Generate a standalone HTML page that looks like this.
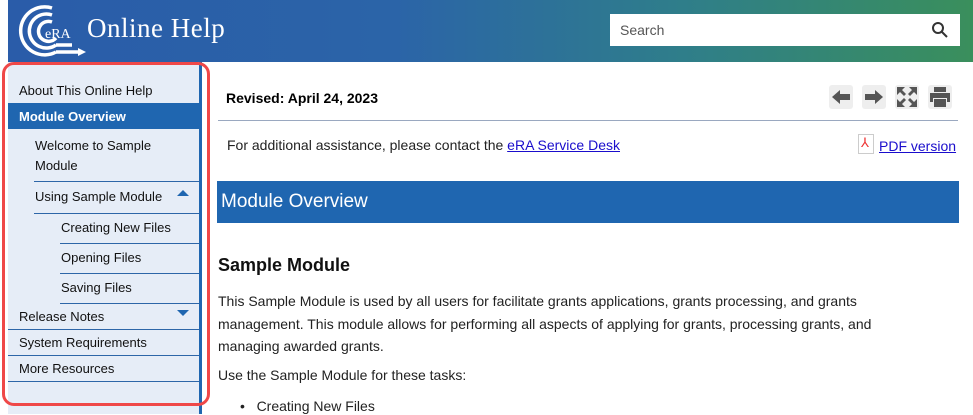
<!DOCTYPE html>
<html><head><style>
body{margin:0;width:973px;height:414px;overflow:hidden;background:#fff;font-family:"Liberation Sans",sans-serif;position:relative}
.hdr{position:absolute;left:8px;top:0;width:965px;height:62px;background:linear-gradient(90deg,#2a5ca9 0%,#2b64a8 40%,#2f7e8a 70%,#3a8f5c 100%)}
.title{position:absolute;left:79px;top:13px;color:#fff;font-family:"Liberation Serif",serif;font-size:27px;letter-spacing:0.5px}
.search{position:absolute;left:602px;top:14px;width:350px;height:32px;background:#fff;box-sizing:border-box}
.search span{position:absolute;left:10px;top:8px;font-size:14px;color:#555}
.side{position:absolute;left:8px;top:62px;width:191px;height:352px;background:#e6edf7;border-right:3px solid #1f66b0}
.side div{position:absolute;font-size:13px;color:#111;box-sizing:border-box;border-bottom:1.5px solid #2d66a8}
.red{position:absolute;left:2px;top:62px;width:202px;height:338px;border:3px solid #ef4848;border-radius:12px}
.main{position:absolute;left:218px;line-height:18px}
a{color:#1a0dcc}
.ic{position:absolute;top:85px;width:24px;height:24px;background:#eee;border-radius:3px}
</style></head><body>
<div class="hdr">
<svg style="position:absolute;left:10px;top:4px" width="70" height="54" viewBox="0 0 70 54"><g fill="none" stroke="#fff" stroke-width="3.5"><path d="M34 4 A24 24 0 1 0 38 48"/><path d="M34 11 A17 17 0 1 0 38 41"/><path d="M34 18 A10 10 0 1 0 38 34"/><path d="M38 48 H62 M38 41 H54"/></g><path d="M60 44 L68 48 L60 52Z" fill="#fff"/><text x="27" y="34" fill="#fff" font-family="Liberation Serif" font-size="14">eRA</text></svg>
<div class="title">Online Help</div>
<div class="search"><span>Search</span><svg style="position:absolute;right:12px;top:8px" width="16" height="16"><circle cx="6" cy="6" r="5" fill="none" stroke="#333" stroke-width="2"/><path d="M10 10L15 15" stroke="#333" stroke-width="2"/></svg></div>
</div>
<div class="side">
<div style="left:0;top:14px;width:191px;height:24px;padding:7px 11px;border:none">About This Online Help</div>
<div style="left:0;top:41px;width:191px;height:26px;padding:6px 11px;background:#1f66b0;color:#fff;font-weight:bold;border:none">Module Overview</div>
<div style="left:26px;top:70px;width:165px;height:50px;padding:4px 1px;line-height:20px">Welcome to Sample<br>Module</div>
<div style="left:26px;top:122px;width:165px;height:30px;padding:5px 1px">Using Sample Module<span style="position:absolute;right:10px;top:6px;width:0;height:0;border:6px solid transparent;border-bottom:6px solid #1f66b0;border-top:0"></span></div>
<div style="left:52px;top:152px;width:139px;height:30px;padding:6px 1px">Creating New Files</div>
<div style="left:52px;top:182px;width:139px;height:30px;padding:6px 1px">Opening Files</div>
<div style="left:52px;top:212px;width:139px;height:30px;padding:6px 1px">Saving Files</div>
<div style="left:0;top:242px;width:191px;height:26px;padding:5px 11px">Release Notes<span style="position:absolute;right:10px;top:6px;width:0;height:0;border:6px solid transparent;border-top:6px solid #1f66b0;border-bottom:0"></span></div>
<div style="left:0;top:268px;width:191px;height:26px;padding:5px 11px">System Requirements</div>
<div style="left:0;top:294px;width:191px;height:26px;padding:5px 11px">More Resources</div>
</div>
<div class="red"></div>
<div class="main" style="left:226px;top:89px;font-size:14px;font-weight:bold">Revised: April 24, 2023</div>
<div class="ic" style="left:829px"><svg width="24" height="24"><path d="M3 12L11 5V9H21V15H11V19Z" fill="#555"/></svg></div>
<div class="ic" style="left:862px"><svg width="24" height="24"><path d="M21 12L13 5V9H3V15H13V19Z" fill="#555"/></svg></div>
<div class="ic" style="left:895px"><svg width="24" height="24"><path d="M2 2h8l-3 3 4 4-2 2-4-4-3 3zM22 2v8l-3-3-4 4-2-2 4-4-3-3zM2 22v-8l3 3 4-4 2 2-4 4 3 3zM22 22h-8l3-3-4-4 2-2 4 4 3-3z" fill="#555"/></svg></div>
<div class="ic" style="left:928px"><svg width="24" height="24"><path d="M6 2h12v5H6zM2 8h20v9h-3v-4H5v4H2zM6 14h12v8H6z" fill="#555"/></svg></div>
<div style="position:absolute;left:218px;top:120px;width:740px;height:1px;background:#9aa8c0"></div>
<div class="main" style="left:227px;top:136px;font-size:14px;color:#222">For additional assistance, please contact the <a href="#">eRA Service Desk</a></div>
<div style="position:absolute;left:858px;top:134px;width:14px;height:18px;border:1px solid #ccc;background:#fff"><span style="color:#e33;font-size:13px;position:absolute;left:2px;top:0">⅄</span></div>
<div class="main" style="left:879px;top:137px;font-size:14px"><a href="#">PDF version</a></div>
<div style="position:absolute;left:217px;top:181px;width:742px;height:42px;background:#1f66b0;color:#fff;font-size:19px;line-height:42px;padding-left:4px;box-sizing:border-box">Module Overview</div>
<div class="main" style="top:254px;font-size:18px;font-weight:bold;color:#111;line-height:22px">Sample Module</div>
<div class="main" style="top:290px;width:705px;font-size:14px;line-height:22.5px;color:#222">This Sample Module is used by all users for facilitate grants applications, grants processing, and grants management. This module allows for performing all aspects of applying for grants, processing grants, and managing awarded grants.</div>
<div class="main" style="top:366px;font-size:14px;color:#222">Use the Sample Module for these tasks:</div>
<div class="main" style="left:240px;top:397px;font-size:14px;color:#222">•&nbsp;&nbsp;&nbsp;Creating New Files</div>
</body></html>
